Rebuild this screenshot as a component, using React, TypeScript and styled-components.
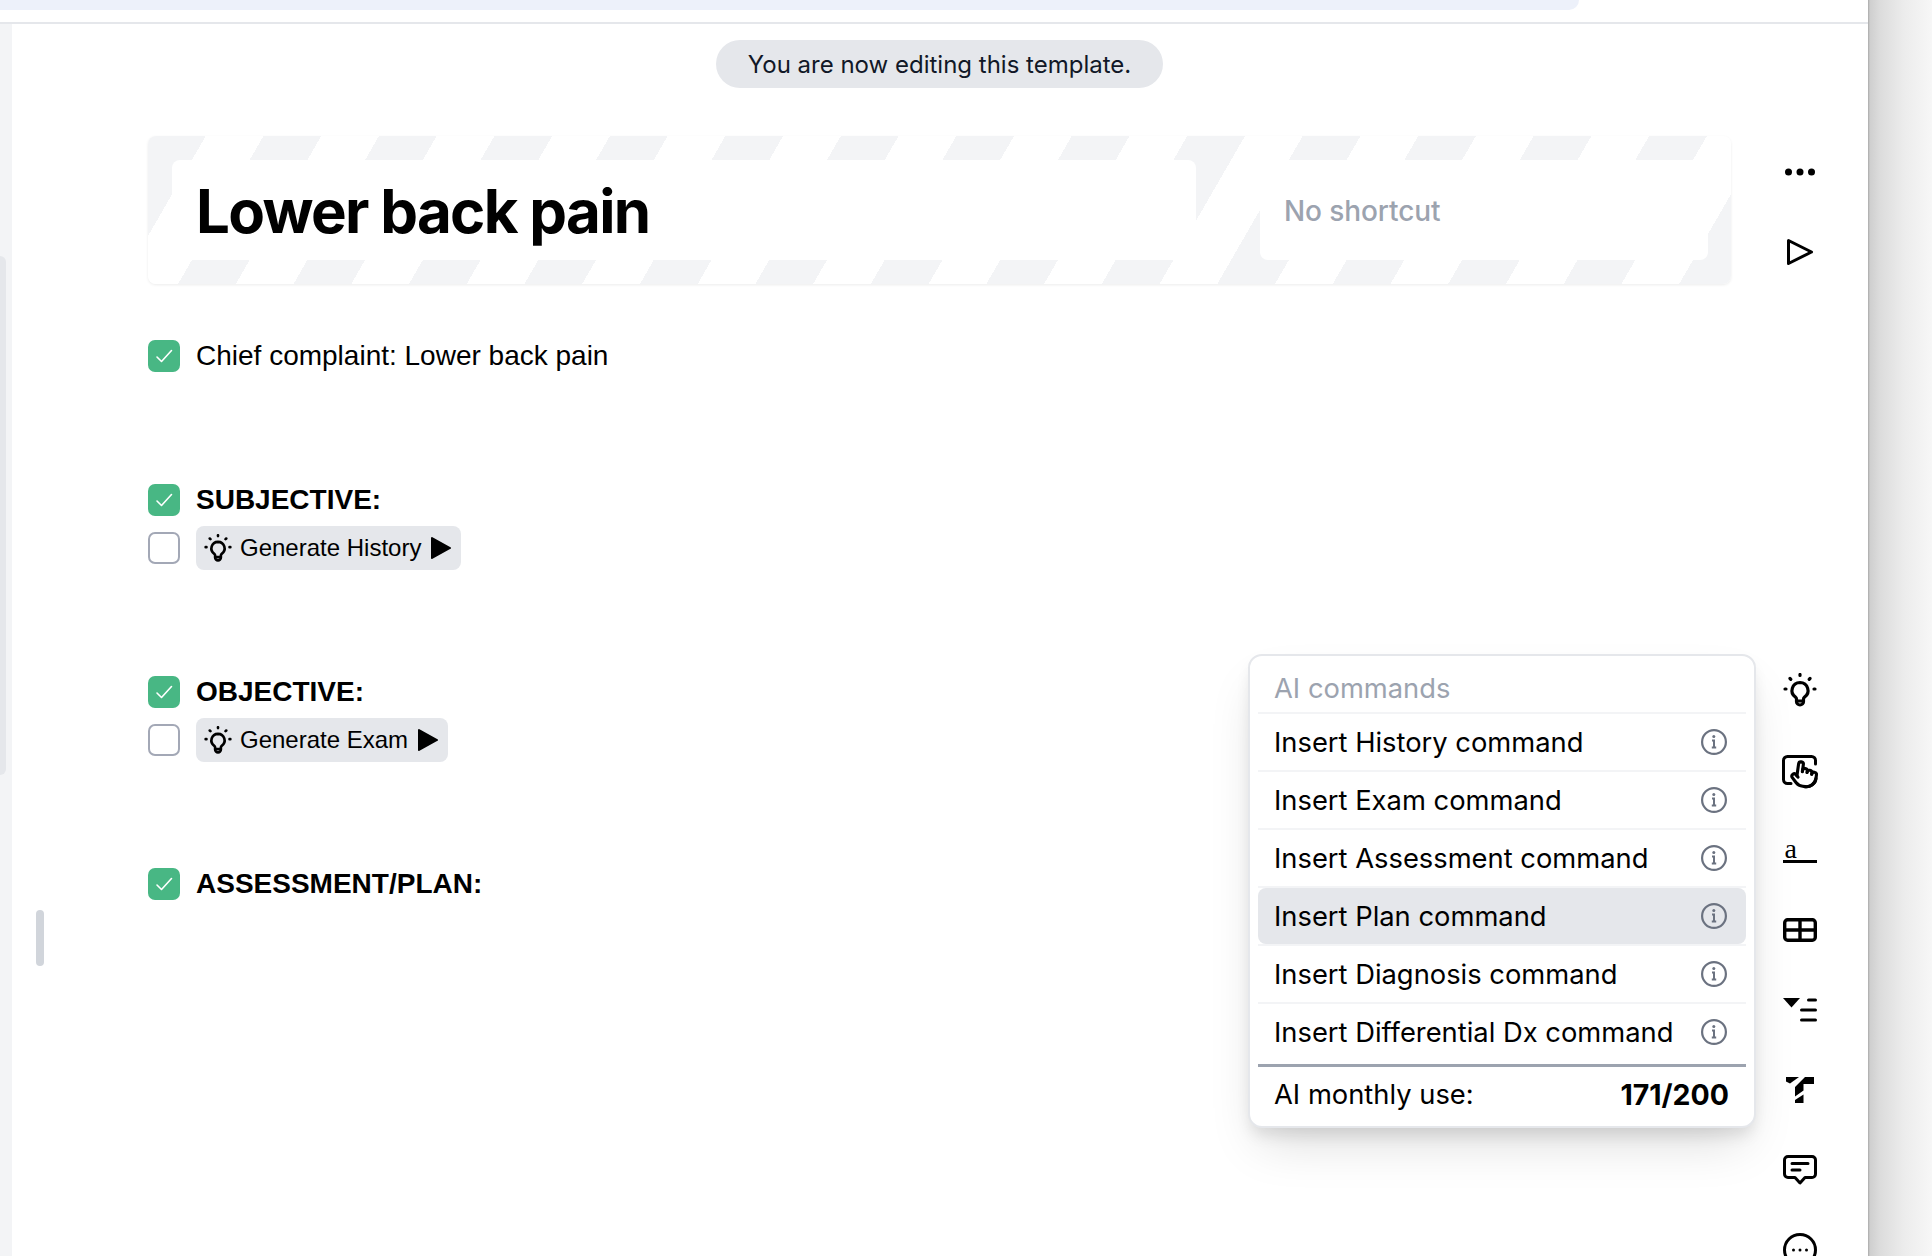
import React from 'react';
import styled, { createGlobalStyle } from 'styled-components';

const GlobalStyle = createGlobalStyle`
  html, body {
    margin: 0;
    padding: 0;
    background: #f7f7f7;
  }
`;

const Page = styled('div')`
  width: 1932px;
  height: 1256px;
  overflow: hidden;
  display: flex;
`;

const Panel = styled('div')`
  width: 1868px;
  height: 1256px;
  flex: none;
  background: white;
  overflow: hidden;
  display: flex;
  flex-direction: column;
`;

const Backdrop = styled('div')`
  flex: 1;
  background: linear-gradient(90deg, #a9a9a9 0, #cfcfcf 2px, #dcdcdc 12px, #ececec 36px, #f7f7f7 64px);
`;

const TopBar = styled('div')`
  height: 22px;
  flex: none;
  border-bottom: 2px solid #e5e7eb;
`;

const TopStrip = styled('div')`
  width: 1579px;
  height: 10px;
  background: #edf1fa;
  border-bottom-right-radius: 20px;
`;

const Body = styled('div')`
  flex: 1;
  display: flex;
  min-height: 0;
`;

const Rail = styled('div')`
  width: 12px;
  flex: none;
  background: #f3f4f6;
`;

const RailThumb = styled('div')`
  width: 6px;
  height: 519px;
  margin-top: 232px;
  background: #e5e7eb;
  border-radius: 0 6px 6px 0;
`;

const Gutter = styled('div')`
  width: 136px;
  flex: none;
  padding: 886px 0 0 24px;
  box-sizing: border-box;
`;

const DragHandle = styled('div')`
  width: 8px;
  height: 56px;
  border-radius: 4px;
  background: #d1d5db;
`;

const Content = styled('div')`
  position: relative;
  width: 1583px;
  flex: none;
  display: flex;
  flex-direction: column;
  font-family: "Liberation Sans", Arial, sans-serif;
`;

const NoticeRow = styled('div')`
  display: flex;
  justify-content: center;
  margin-top: 16px;
`;

const Notice = styled('div')`
  height: 48px;
  width: 447px;
  border-radius: 24px;
  background: #e5e7eb;
  color: #111827;
  display: flex;
  align-items: center;
  justify-content: center;
  font-family: Inter, sans-serif;
  font-size: 24px;
`;

const Banner = styled('div')`
  margin-top: 48px;
  height: 148px;
  box-sizing: border-box;
  padding: 24px 23px 24px 24px;
  display: flex;
  gap: 64px;
  border-radius: 8px;
  background: repeating-linear-gradient(120deg, #f3f4f6 0 50px, #fff 50px 100px);
  box-shadow: 0 1px 3px rgba(0, 0, 0, 0.08);
`;

const TitleField = styled('div')`
  width: 1024px;
  flex: none;
  display: flex;
  align-items: center;
  padding: 2px 0 0 24px;
  box-sizing: border-box;
  background: white;
  border-radius: 8px;
  font-family: Inter, sans-serif;
  font-size: 60px;
  font-weight: 700;
  letter-spacing: -1.7px;
  color: #000;
`;

const ShortcutField = styled('div')`
  flex: 1;
  display: flex;
  align-items: center;
  padding: 2px 0 0 24px;
  background: white;
  border-radius: 8px;
  font-family: Inter, sans-serif;
  font-size: 28px;
  font-weight: 500;
  letter-spacing: -0.1px;
  color: #9ca3af;
`;

const Doc = styled('div')`
  margin-top: 48px;
  display: flex;
  flex-direction: column;
  gap: 96px;
`;

const Section = styled('div')`
  display: flex;
  flex-direction: column;
`;

const Row = styled('div')`
  height: 48px;
  display: flex;
  align-items: center;
  gap: 16px;
  font-size: 28px;
  font-weight: ${({ $bold }: { $bold?: boolean }) => ($bold ? 700 : 400)};
  color: #000;
`;

const CheckBox = styled('div')<{ $checked?: boolean }>`
  width: 32px;
  height: 32px;
  flex: none;
  box-sizing: border-box;
  border-radius: 7px;
  display: flex;
  align-items: center;
  justify-content: center;
  background: ${({ $checked }) => ($checked ? '#48b784' : '#fff')};
  border: ${({ $checked }) => ($checked ? 'none' : '2px solid #a3a8b6')};
`;

const CommandChip = styled('div')`
  height: 44px;
  display: flex;
  align-items: center;
  box-sizing: border-box;
  padding: 0 10px 0 8px;
  gap: 8px;
  border-radius: 8px;
  background: #e5e7eb;
  font-size: 24px;
`;

const ToolColumn = styled('div')`
  flex: 1;
  display: flex;
  flex-direction: column;
  align-items: center;
  color: #000;
`;

const ToolSlot = styled('div')<{ $top: number }>`
  margin-top: ${({ $top }) => $top}px;
  flex: none;
  display: flex;
  justify-content: center;
`;

const TextFieldIcon = styled('div')`
  width: 34px;
  height: 21px;
  box-sizing: border-box;
  padding-left: 2px;
  border-bottom: 3px solid #000;
  font-family: "Liberation Serif", serif;
  font-size: 28px;
  line-height: 13px;
  color: #000;
`;

const Menu = styled('div')`
  position: absolute;
  left: 1100px;
  top: 630px;
  width: 508px;
  height: 474px;
  box-sizing: border-box;
  padding: 0 8px;
  background: white;
  border: 2px solid #e5e7eb;
  border-radius: 14px;
  box-shadow: 0 10px 15px -3px rgba(0, 0, 0, 0.1), 0 25px 50px -12px rgba(0, 0, 0, 0.15);
  font-family: Inter, sans-serif;
  font-size: 27.34px;
  color: #000;
`;

const MenuHeader = styled('div')`
  height: 56px;
  box-sizing: border-box;
  padding: 8px 0 0 16px;
  display: flex;
  align-items: center;
  color: #9ca3af;
  border-bottom: 0;
`;

const MenuRow = styled('div')`
  border-top: 2px solid #f3f4f6;
`;

const MenuItem = styled('div')<{ $active?: boolean }>`
  height: 56px;
  padding: 0 19px 0 16px;
  display: flex;
  align-items: center;
  justify-content: space-between;
  border-radius: 8px;
  background: ${({ $active }) => ($active ? '#e5e7eb' : 'transparent')};
`;

const MenuFooter = styled('div')`
  height: 58px;
  margin-top: 4px;
  padding: 0 17px 0 16px;
  display: flex;
  align-items: center;
  justify-content: space-between;
  border-top: 3px solid #9ca3af;
  box-sizing: border-box;
`;

const Usage = styled('span')`
  font-size: 28.5px;
  font-weight: 700;
`;

const CheckMark = () => (
  <svg width="18" height="18" viewBox="0 0 18 18" fill="none" stroke="#fff" strokeWidth="1.6" strokeLinecap="round" strokeLinejoin="round">
    <path d="M2 10 6.500 14.500 16.500 3.500" />
  </svg>
);

const Bulb = ({ size }: { size: number }) => (
  <svg width={size} height={size} viewBox="0 0 34 34" fill="none" stroke="#000" strokeWidth="3.200" strokeLinecap="round" strokeLinejoin="round">
    <path d="M17 1.500v1M7 5.500l.8.8M27 5.500l-.8.8M2 16h1M31 16h1" />
    <path d="M17 9.500a8 8 0 0 0-4.500 14.600c.7.500 1 1.200 1 2v2.400a3.500 3.500 0 0 0 7 0v-2.400c0-.8.3-1.500 1-2A8 8 0 0 0 17 9.500z" />
    <path d="M14 28h6" />
  </svg>
);

const SolidPlay = () => (
  <svg width="22" height="24" viewBox="0 0 22 24" fill="#000" stroke="#000" strokeWidth="2" strokeLinejoin="round">
    <path d="M3 2 21 12 3 22z" />
  </svg>
);

const InfoIcon = () => (
  <svg width="26" height="26" viewBox="0 0 26 26" fill="none" stroke="#6b7280" strokeWidth="2.200">
    <circle cx="13" cy="13" r="11.900" />
    <path d="M11 11.500h2v7M10.800 18.500h4.400" strokeWidth="2" />
    <circle cx="12.800" cy="7.600" r="1.500" fill="#6b7280" stroke="none" />
  </svg>
);

const COMMANDS = ['History', 'Exam', 'Assessment', 'Plan', 'Diagnosis', 'Differential Dx'];

const Chip = ({ label }: { label: string }) => (
  <CommandChip>
    <Bulb size={28} />
    {label}
    <SolidPlay />
  </CommandChip>
);

export default function App() {
  return (
    <Page>
      <GlobalStyle />
      <Panel>
        <TopBar>
          <TopStrip />
        </TopBar>
        <Body>
          <Rail>
            <RailThumb />
          </Rail>
          <Gutter>
            <DragHandle />
          </Gutter>
          <Content>
            <NoticeRow>
              <Notice>You are now editing this template.</Notice>
            </NoticeRow>
            <Banner>
              <TitleField>Lower back pain</TitleField>
              <ShortcutField>No shortcut</ShortcutField>
            </Banner>
            <Doc>
              <Section>
                <Row>
                  <CheckBox $checked><CheckMark /></CheckBox>
                  Chief complaint: Lower back pain
                </Row>
              </Section>
              <Section>
                <Row $bold>
                  <CheckBox $checked><CheckMark /></CheckBox>
                  SUBJECTIVE:
                </Row>
                <Row>
                  <CheckBox />
                  <Chip label="Generate History" />
                </Row>
              </Section>
              <Section>
                <Row $bold>
                  <CheckBox $checked><CheckMark /></CheckBox>
                  OBJECTIVE:
                </Row>
                <Row>
                  <CheckBox />
                  <Chip label="Generate Exam" />
                </Row>
              </Section>
              <Section>
                <Row $bold>
                  <CheckBox $checked><CheckMark /></CheckBox>
                  ASSESSMENT/PLAN:
                </Row>
              </Section>
            </Doc>
            <Menu>
              <MenuHeader>AI commands</MenuHeader>
              {COMMANDS.map((name) => (
                <MenuRow key={name}>
                  <MenuItem $active={name === 'Plan'}>
                    Insert {name} command
                    <InfoIcon />
                  </MenuItem>
                </MenuRow>
              ))}
              <MenuFooter>
                AI monthly use:
                <Usage>171/200</Usage>
              </MenuFooter>
            </Menu>
          </Content>
          <ToolColumn>
            <ToolSlot $top={144}>
              <svg width="30" height="8" viewBox="0 0 30 8" fill="#000">
                <circle cx="3.500" cy="4" r="3.500" />
                <circle cx="15" cy="4" r="3.500" />
                <circle cx="26.500" cy="4" r="3.500" />
              </svg>
            </ToolSlot>
            <ToolSlot $top={62}>
              <svg width="28" height="28" viewBox="0 0 28 28" fill="none" stroke="#000" strokeWidth="3" strokeLinejoin="round">
                <path d="M2.500 2.500 25.500 14 2.500 25.500z" />
              </svg>
            </ToolSlot>
            <ToolSlot $top={407}>
              <Bulb size={34} />
            </ToolSlot>
            <ToolSlot $top={48}>
              <svg width="36" height="34" viewBox="0 0 36 34" fill="none" stroke="#000" strokeWidth="3" strokeLinecap="round" strokeLinejoin="round">
                <path d="M9 28.500H5.500a4 4 0 0 1-4-4V5.500a4 4 0 0 1 4-4h24a4 4 0 0 1 4 4V9" />
                <g transform="translate(8 5) scale(1.200) rotate(8 12 12)" strokeWidth="2.600">
                  <path d="M22 14a8 8 0 0 1-8 8" />
                  <path d="M18 11v-1a2 2 0 0 0-2-2a2 2 0 0 0-2 2" />
                  <path d="M14 10V9a2 2 0 0 0-2-2a2 2 0 0 0-2 2v1" />
                  <path d="M10 9.500V4a2 2 0 0 0-2-2a2 2 0 0 0-2 2v10" />
                  <path d="M18 11a2 2 0 1 1 4 0v3a8 8 0 0 1-8 8h-2c-2.800 0-4.500-.86-5.990-2.340l-3.600-3.600a2 2 0 0 1 2.830-2.820L7 15" />
                </g>
              </svg>
            </ToolSlot>
            <ToolSlot $top={53}>
              <TextFieldIcon>a</TextFieldIcon>
            </ToolSlot>
            <ToolSlot $top={55}>
              <svg width="34" height="24" viewBox="0 0 34 24" fill="none" stroke="#000" strokeWidth="3.400" strokeLinejoin="round">
                <rect x="1.700" y="1.700" width="30.600" height="20.600" rx="3" />
                <path d="M1.700 12h30.600M17 1.700v20.600" />
              </svg>
            </ToolSlot>
            <ToolSlot $top={56}>
              <svg width="34" height="24" viewBox="0 0 34 24" fill="#000">
                <path d="M0 0h17l-8.500 9.500z" />
                <rect x="24" y="0.500" width="10" height="3" rx="1.500" />
                <rect x="17" y="10.500" width="17" height="3" rx="1.500" />
                <rect x="17" y="20.500" width="17" height="3" rx="1.500" />
              </svg>
            </ToolSlot>
            <ToolSlot $top={55}>
              <svg width="28" height="26" viewBox="0 0 28 26" fill="#000">
                <path d="M0 0h13L4 6.500 0 4.500z" />
                <path d="M19 0h9v7H17.500v6.500L9 19.500V10z" />
                <path d="M17.500 17.500V26H9v-3z" />
              </svg>
            </ToolSlot>
            <ToolSlot $top={52}>
              <svg width="34" height="30" viewBox="0 0 34 30" fill="none" stroke="#000" strokeWidth="3" strokeLinecap="round" strokeLinejoin="round">
                <path d="M5 1.500h24a3.500 3.500 0 0 1 3.500 3.500v14a3.500 3.500 0 0 1-3.500 3.500h-7L17 28l-5-5.500H5A3.500 3.500 0 0 1 1.500 19V5A3.500 3.500 0 0 1 5 1.500z" />
                <path d="M9 8.500h16M9 15h8" />
              </svg>
            </ToolSlot>
            <ToolSlot $top={48}>
              <svg width="34" height="34" viewBox="0 0 34 34" fill="none" stroke="#000" strokeWidth="3">
                <circle cx="17" cy="17" r="15.500" />
                <circle cx="10.500" cy="17" r="1.500" fill="#000" stroke="none" />
                <circle cx="17" cy="17" r="1.500" fill="#000" stroke="none" />
                <circle cx="23.500" cy="17" r="1.500" fill="#000" stroke="none" />
              </svg>
            </ToolSlot>
          </ToolColumn>
        </Body>
      </Panel>
      <Backdrop />
    </Page>
  );
}
